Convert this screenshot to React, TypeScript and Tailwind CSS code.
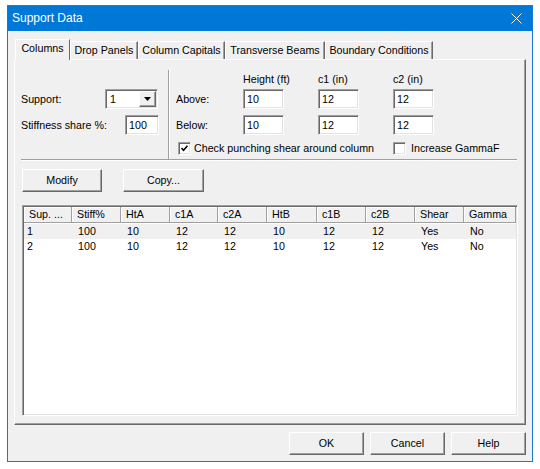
import React from 'react';

const FONT = { fontFamily: '"Liberation Sans", Arial, sans-serif' };

const tabs: [string, number][] = [
  ['Columns', 55],
  ['Drop Panels', 68],
  ['Column Capitals', 87],
  ['Transverse Beams', 100],
  ['Boundary Conditions', 108],
];

const columns: [string, number][] = [
  ['Sup. ...', 48],
  ['Stiff%', 49],
  ['HtA', 49],
  ['c1A', 48],
  ['c2A', 49],
  ['HtB', 50],
  ['c1B', 49],
  ['c2B', 49],
  ['Shear', 49],
  ['Gamma', 52],
];

const rows = [
  ['1', '100', '10', '12', '12', '10', '12', '12', 'Yes', 'No'],
  ['2', '100', '10', '12', '12', '10', '12', '12', 'Yes', 'No'],
];

const sunken =
  'border border-t-[#a0a0a0] border-l-[#a0a0a0] border-r-white border-b-white shadow-[inset_1px_1px_0_#696969,inset_-1px_-1px_0_#e3e3e3]';
const raised =
  'border border-t-white border-l-white border-r-[#696969] border-b-[#696969] shadow-[inset_-1px_-1px_0_#a0a0a0]';

function TextBox({ value, width }: { value: string; width: string }) {
  return (
    <div className={`${width} h-[20px] bg-white flex items-center pl-[3px] ${sunken}`}>
      {value}
    </div>
  );
}

function Button({ label, width }: { label: string; width: string }) {
  return (
    <div className={`${width} h-[23px] bg-[#f0f0f0] flex items-center justify-center ${raised}`}>
      {label}
    </div>
  );
}

function CheckBox({ checked }: { checked?: boolean }) {
  return (
    <div className={`w-[13px] h-[13px] bg-white flex items-center justify-center ${sunken}`}>
      {checked && (
        <svg width="9" height="9" viewBox="0 0 9 9">
          <path d="M1.5 4 L3.5 6.2 L7.5 1.8" fill="none" stroke="#000" strokeWidth="1.6" />
        </svg>
      )}
    </div>
  );
}

export default function App() {
  return (
    <div className="w-[540px] h-[469px] bg-white pt-[5px] pl-[7px] text-[10.7px] text-black" style={FONT}>
      <div className="w-[526px] h-[457px] border border-[#1a79d4] flex flex-col bg-[#f0f0f0]">
        {/* title bar */}
        <div className="h-[25px] bg-[#0078d7] flex items-center justify-between pl-[4px] pr-[10px] text-white text-[12px]">
          <span className="-mt-[2px]">Support Data</span>
          <svg width="11" height="11" viewBox="0 0 11 11" className="-mt-[1px]">
            <path d="M0.5 0.5 L10.5 10.5 M10.5 0.5 L0.5 10.5" stroke="#fff" strokeWidth="1" />
          </svg>
        </div>

        <div className="flex-1 flex flex-col pt-[8px] pl-[6px]">
          {/* tabs */}
          <div className="flex items-end h-[20px] pl-[1px]">
            {tabs.map(([name, w], i) =>
              i === 0 ? (
                <div
                  key={name}
                  style={{ width: w }}
                  className="relative z-10 -mb-px h-[21px] bg-[#f0f0f0] border-t border-l border-r border-t-white border-l-white border-r-[#696969] flex items-center justify-center pb-[3px]"
                >
                  {name}
                </div>
              ) : (
                <div
                  key={name}
                  style={{ width: w }}
                  className="h-[18px] bg-[#f0f0f0] border-t border-l border-r border-t-white border-l-white border-r-[#696969] shadow-[inset_-1px_0_0_#a0a0a0] flex items-center justify-center"
                >
                  {name}
                </div>
              )
            )}
          </div>

          {/* panel */}
          <div className={`w-[512px] h-[366px] flex flex-col ${raised}`}>
            <div className="flex h-[99px]">
              <div className="w-[153px] pl-[6px] pt-[29px]">
                <div className="flex items-center h-[20px]">
                  <span className="w-[84px]">Support:</span>
                  <div className={`w-[53px] h-[20px] bg-white flex items-center ${sunken}`}>
                    <span className="flex-1 pl-[4px]">1</span>
                    <div className={`w-[17px] h-[16px] mr-[1px] bg-[#f0f0f0] flex items-center justify-center ${raised}`}>
                      <svg width="7" height="4" viewBox="0 0 7 4">
                        <path d="M0 0 H7 L3.5 4 Z" fill="#000" />
                      </svg>
                    </div>
                  </div>
                </div>
                <div className="flex items-center h-[20px] mt-[6px]">
                  <span className="w-[104px]">Stiffness share %:</span>
                  <TextBox value="100" width="w-[34px]" />
                </div>
              </div>

              <div className="mt-[10px] w-[2px] border-l border-r border-l-[#a0a0a0] border-r-white" />

              <div className="flex-1 pl-[6px] pt-[11px]">
                <div className="grid grid-cols-[67px_75px_75px_1fr] h-[14px] items-center">
                  <span />
                  <span>Height (ft)</span>
                  <span>c1 (in)</span>
                  <span>c2 (in)</span>
                </div>
                <div className="grid grid-cols-[67px_75px_75px_1fr] mt-[4px] items-center">
                  <span>Above:</span>
                  <TextBox value="10" width="w-[41px]" />
                  <TextBox value="12" width="w-[41px]" />
                  <TextBox value="12" width="w-[41px]" />
                </div>
                <div className="grid grid-cols-[67px_75px_75px_1fr] mt-[6px] items-center">
                  <span>Below:</span>
                  <TextBox value="10" width="w-[41px]" />
                  <TextBox value="12" width="w-[41px]" />
                  <TextBox value="12" width="w-[41px]" />
                </div>
                <div className="flex items-center mt-[7px] h-[13px]">
                  <div className="w-[217px] flex items-center pl-[2px]">
                    <CheckBox checked />
                    <span className="ml-[3px]">Check punching shear around column</span>
                  </div>
                  <CheckBox />
                  <span className="ml-[5px]">Increase GammaF</span>
                </div>
              </div>
            </div>

            <div className="ml-[6px] w-[496px] h-[2px] border-t border-b border-t-[#a0a0a0] border-b-white" />

            <div className="flex mt-[8px] ml-[7px] gap-[21px]">
              <Button label="Modify" width="w-[80px]" />
              <Button label="Copy..." width="w-[81px]" />
            </div>

            {/* list view */}
            <div className={`ml-[7px] mt-[13px] w-[496px] h-[211px] bg-white p-[1px] ${sunken}`}>
              <div className="flex h-[16px]">
                {columns.map(([name, w]) => (
                  <div
                    key={name}
                    style={{ width: w }}
                    className="h-[16px] bg-[#f0f0f0] border-r border-b border-r-[#a0a0a0] border-b-[#a0a0a0] shadow-[inset_1px_1px_0_#fff] flex items-center pl-[5px]"
                  >
                    {name}
                  </div>
                ))}
              </div>
              <div className="pt-[1px]">
                {rows.map((r, ri) => (
                  <div key={ri} className={`flex h-[15px] items-center ${ri === 0 ? 'bg-[#f0f0f0]' : ''}`}>
                    {r.map((c, ci) => (
                      <div
                        key={ci}
                        style={{ width: columns[ci][1] }}
                        className={ci === 0 ? 'pl-[3px]' : 'pl-[6px]'}
                      >
                        {c}
                      </div>
                    ))}
                  </div>
                ))}
              </div>
            </div>
          </div>

          {/* dialog buttons */}
          <div className="flex justify-end gap-[6px] mt-[7px] pr-[6px]">
            <Button label="OK" width="w-[75px]" />
            <Button label="Cancel" width="w-[75px]" />
            <Button label="Help" width="w-[75px]" />
          </div>
        </div>
      </div>
    </div>
  );
}
